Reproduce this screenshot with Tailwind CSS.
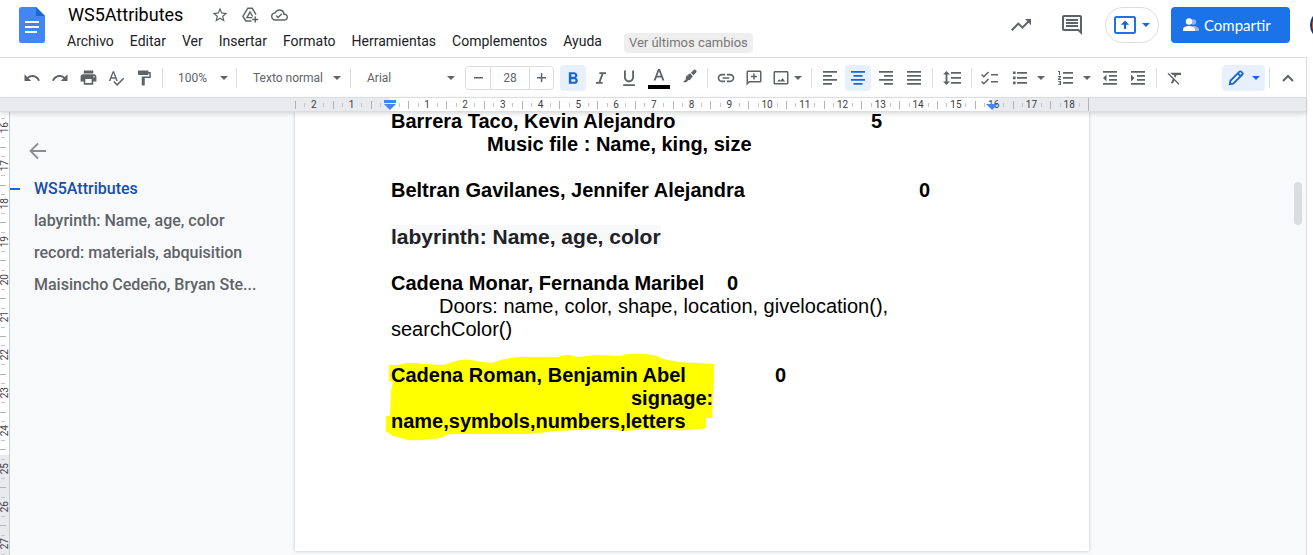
<!DOCTYPE html>
<html lang="es">
<head>
<meta charset="utf-8">
<title>WS5Attributes</title>
<script src="https://cdn.jsdelivr.net/npm/@tailwindcss/browser@4"></script>
</head>
<body class="flex h-screen flex-col overflow-hidden bg-white font-[Roboto,sans-serif] text-[#202124]">
<svg class="hidden">
  <symbol id="caret" viewBox="0 0 8 4"><path d="M0 0h8L4 4z"/></symbol>
</svg>

<header class="flex h-[57px] shrink-0 items-start overflow-hidden pl-[19px]">
  <a href="#" aria-label="Inicio de Documentos" class="mt-[7px] shrink-0">
    <svg class="h-9 w-[26px]" viewBox="0 0 26 36"><path fill="#4285f4" d="M2.500 0H17l9 9v24.500a2.500 2.500 0 0 1-2.500 2.500h-21A2.500 2.500 0 0 1 0 33.500v-31A2.500 2.500 0 0 1 2.500 0z"/><path fill="#1967d2" d="M17 0l9 9h-9z"/><path fill="#fff" d="M6 14h14v2H6zM6 19h14v2H6zM6 24h12v2H6z"/></svg>
  </a>
  <div class="ml-3.5 min-w-0 flex-1">
    <div class="flex h-7 items-center pt-0.5 pl-[9px]">
      <h1 class="text-[18px] leading-6 text-black">WS5Attributes</h1>
      <div class="ml-7 flex items-center gap-3 text-[#5f6368]">
        <button aria-label="Destacar"><svg class="size-[18px]" viewBox="0 0 24 24" fill="currentColor"><path d="M22 9.240l-7.190-.62L12 2 9.190 8.630 2 9.240l5.460 4.730L5.820 21 12 17.270 18.180 21l-1.630-7.030L22 9.240zM12 15.400l-3.760 2.270 1-4.280-3.320-2.880 4.380-.38L12 6.100l1.710 4.040 4.380.38-3.320 2.880 1 4.280L12 15.400z"/></svg></button>
        <button aria-label="Añadir a Drive"><svg class="size-[18px]" viewBox="0 0 24 24" fill="none" stroke="currentColor" stroke-width="1.900"><path d="M14 20H6.500L2.500 14 9 3h6l5 8.500"/><path d="M15 15.500H8L12 8l3.500 6"/><path d="M19 14v8M15 18h8"/></svg></button>
        <button aria-label="Estado del documento"><svg class="h-[18px] w-[17px]" viewBox="0 0 24 24" fill="currentColor"><path d="M19.350 10.040A7.490 7.490 0 0 0 12 4C9.110 4 6.600 5.640 5.350 8.040A5.994 5.994 0 0 0 0 14c0 3.310 2.690 6 6 6h13c2.760 0 5-2.240 5-5 0-2.640-2.050-4.780-4.650-4.960zM19 18H6c-2.210 0-4-1.790-4-4s1.790-4 4-4h.71C7.370 7.690 9.480 6 12 6c3.040 0 5.500 2.460 5.500 5.500v.5H19c1.660 0 3 1.340 3 3s-1.340 3-3 3z"/><path d="M10 14.200l-2.100-2.100-1.400 1.400 3.500 3.500 6-6-1.400-1.400z"/></svg></button>
      </div>
    </div>
    <nav class="flex h-[26px] items-center text-[14px] leading-5">
      <button class="px-2">Archivo</button><button class="px-2">Editar</button><button class="px-2">Ver</button><button class="px-2">Insertar</button><button class="px-2">Formato</button><button class="px-2">Herramientas</button><button class="px-2">Complementos</button><button class="px-2">Ayuda</button>
      <a href="#" class="mt-1 ml-3.5 rounded-sm bg-[#eeeeee] px-[5px] text-[13px] leading-5 text-[#777]">Ver últimos cambios</a>
    </nav>
  </div>
  <div class="mt-[7px] flex h-9 shrink-0 items-center text-[#5f6368]">
    <button aria-label="Actividad"><svg class="size-6" viewBox="0 0 24 24" fill="currentColor"><path d="M16 6l2.290 2.290-4.880 4.880-4-4L2 16.590 3.410 18l6-6 4 4 6.300-6.290L22 12V6z"/></svg></button>
    <button class="ml-[27px]" aria-label="Comentarios"><svg class="size-6" viewBox="0 0 24 24" fill="currentColor"><path d="M20 2H4c-1.100 0-2 .9-2 2v12c0 1.100.9 2 2 2h14l4 4V4c0-1.100-.9-2-2-2zm0 15.170L18.830 16H4V4h16v13.170zM6 12h12v2H6zm0-3h12v2H6zm0-3h12v2H6z"/></svg></button>
    <button class="ml-[21px] flex h-9 w-[54px] items-center justify-center gap-1.5 rounded-full border border-[#dadce0] text-[#1a73e8]" aria-label="Presentar">
      <svg class="h-[18px] w-[22px]" viewBox="0 0 22 18"><rect x="1" y="1" width="20" height="16" rx="1.500" fill="none" stroke="#1a73e8" stroke-width="2"/><path fill="#1967d2" d="M11 4.500l4.200 4.300h-3.100v4.200H9.900V8.800H6.800z"/></svg>
      <svg class="h-1 w-2" fill="#1967d2"><use href="#caret"/></svg>
    </button>
    <button class="ml-3 flex h-9 w-[119px] items-center gap-[5px] rounded-sm bg-[#1a73e8] pl-3 font-[Lato,sans-serif] text-[15px] text-white">
      <svg class="h-[14px] w-4" viewBox="0 0 16 14"><circle cx="10.500" cy="4" r="2.700" fill="#8ab8f5"/><path fill="#8ab8f5" d="M10 8c3 0 6 1.500 6 3.500V13h-5z"/><circle cx="6" cy="3.500" r="3.200" fill="#fff"/><path fill="#fff" d="M0 13v-1.700C0 9 3.500 8 6 8s6 1 6 3.300V13z"/></svg>
      Compartir</button>
    <div class="ml-5 w-[3px] overflow-hidden"><div class="size-8 rounded-full border-2 border-[#17375e] bg-[#e4572e]"></div></div>
  </div>
</header>

<div class="mr-1.5 flex min-h-0 flex-1 flex-col border-t border-r border-[#dadce0]">
  <div class="flex h-[39px] shrink-0 items-center pl-[18px] text-[#5f6368]" role="toolbar">
    <button class="flex h-[26px] w-7 items-center justify-center" aria-label="Deshacer"><svg class="size-[18px]" viewBox="0 0 24 24" fill="currentColor"><path d="M12.500 8c-2.650 0-5.050.99-6.900 2.600L2 7v9h9l-3.620-3.620c1.390-1.160 3.160-1.880 5.120-1.880 3.540 0 6.550 2.310 7.600 5.500l2.370-.78C21.080 11.030 17.150 8 12.500 8z"/></svg></button>
    <button class="flex h-[26px] w-7 items-center justify-center" aria-label="Rehacer"><svg class="size-[18px]" viewBox="0 0 24 24" fill="currentColor"><path d="M18.400 10.600C16.550 8.990 14.150 8 11.500 8c-4.650 0-8.580 3.030-9.960 7.220L3.900 16c1.050-3.190 4.050-5.500 7.600-5.500 1.950 0 3.730.72 5.120 1.880L13 16h9V7l-3.600 3.600z"/></svg></button>
    <button class="flex h-[26px] w-7 items-center justify-center" aria-label="Imprimir"><svg class="size-[19px]" viewBox="0 0 24 24" fill="currentColor"><path d="M19 8H5c-1.660 0-3 1.340-3 3v6h4v4h12v-4h4v-6c0-1.660-1.340-3-3-3zm-3 11H8v-5h8v5zm3-7c-.55 0-1-.45-1-1s.45-1 1-1 1 .45 1 1-.45 1-1 1zm-1-9H6v4h12V3z"/></svg></button>
    <button class="flex h-[26px] w-7 items-center justify-center" aria-label="Ortografía"><svg class="size-[18px]" viewBox="0 0 24 24" fill="currentColor"><path d="M12.450 16h2.090L9.430 3H7.570L2.460 16h2.090l1.120-3h5.640l1.140 3zm-6.020-5L8.500 5.480 10.570 11H6.430zm15.160.59l-8.090 8.090L9.830 16l-1.410 1.410 5.090 5.090L23 13l-1.410-1.410z"/></svg></button>
    <button class="flex h-[26px] w-7 items-center justify-center" aria-label="Copiar formato"><svg class="size-[18px]" viewBox="0 0 24 24" fill="currentColor"><path d="M18 4V3c0-.55-.45-1-1-1H5c-.55 0-1 .45-1 1v4c0 .55.45 1 1 1h12c.55 0 1-.45 1-1V6h1v4H9v11c0 .55.45 1 1 1h2c.55 0 1-.45 1-1v-9h8V4h-3z"/></svg></button>
    <span class="mx-1 h-5 w-px shrink-0 bg-[#dadce0]"></span>
    <button class="flex h-[26px] w-[65px] items-center justify-between pr-1 pl-[11px] text-[12px]">100%<svg class="h-1 w-2" fill="currentColor"><use href="#caret"/></svg></button>
    <span class="mx-1 h-5 w-px shrink-0 bg-[#dadce0]"></span>
    <button class="flex h-[26px] w-[105px] items-center justify-between pr-[5px] pl-3 text-[12px]">Texto normal<svg class="h-1 w-2" fill="currentColor"><use href="#caret"/></svg></button>
    <span class="mx-1 h-5 w-px shrink-0 bg-[#dadce0]"></span>
    <button class="flex h-[26px] w-[106px] items-center justify-between pr-1.5 pl-3 text-[12px]">Arial<svg class="h-1 w-2" fill="currentColor"><use href="#caret"/></svg></button>
    <div class="mx-1 flex h-6 w-[89px] items-stretch rounded-sm border border-[#dadce0] text-[12px]">
      <button class="flex w-6 items-center justify-center" aria-label="Reducir"><svg class="size-[9px]" viewBox="0 0 9 9"><path fill="currentColor" d="M0 4h9v1.500H0z"/></svg></button>
      <input aria-label="Tamaño de fuente" value="28" class="min-w-0 flex-1 border-x border-[#dadce0] text-center">
      <button class="flex w-[23px] items-center justify-center" aria-label="Aumentar"><svg class="size-[9px]" viewBox="0 0 9 9"><path fill="currentColor" d="M0 4h9v1.500H0zM3.800 0h1.500v9H3.800z"/></svg></button>
    </div>
    <button class="mx-px ml-0.5 flex h-[26px] w-[26px] items-center justify-center rounded-sm bg-[#e8f0fe] text-[#1967d2]" aria-label="Negrita"><svg class="size-5" viewBox="0 0 24 24" fill="currentColor"><path d="M15.600 11.790c.97-.67 1.650-1.770 1.650-2.790 0-2.260-1.750-4-4-4H7v14h7.040c2.090 0 3.710-1.700 3.710-3.790 0-1.520-.86-2.820-2.150-3.420zM10 7.500h3c.83 0 1.500.67 1.500 1.500s-.67 1.500-1.500 1.500h-3v-3zm3.500 9H10v-3h3.500c.83 0 1.500.67 1.500 1.500s-.67 1.500-1.500 1.500z"/></svg></button>
    <button class="flex h-[26px] w-7 items-center justify-center" aria-label="Cursiva"><svg class="size-5" viewBox="0 0 24 24" fill="currentColor"><path d="M10 5v2.200h2.600l-3.600 9.600H6V19h8v-2.200h-2.600L15 7.200h3V5z"/></svg></button>
    <button class="flex h-[26px] w-7 items-center justify-center" aria-label="Subrayado"><svg class="size-5" viewBox="0 0 24 24" fill="currentColor"><path d="M12 17c3.310 0 6-2.690 6-6V3h-2.200v8c0 2.100-1.700 3.800-3.800 3.800S8.200 13.100 8.200 11V3H6v8c0 3.310 2.690 6 6 6zm-7 2.500v2h14v-2H5z"/></svg></button>
    <button class="flex h-[26px] w-8 items-center justify-center" aria-label="Color del texto"><svg class="h-[22px] w-[22px]" viewBox="0 0 22 22"><path fill="currentColor" d="M10 2h2l4.400 11.500h-2l-1.100-3H8.700l-1.100 3h-2zM9.300 8.800h3.400L11 4.200z"/><path fill="#000" d="M0 18h22v4H0z"/></svg></button>
    <button class="flex h-[26px] w-7 items-start justify-center pt-1" aria-label="Resaltar"><svg class="size-[15px]" viewBox="0 0 16 16" fill="currentColor"><path d="M9.500 4l3-3c.6-.6 1.300-.6 1.800-.1l.9.900c.5.500.5 1.200-.1 1.800l-3 3zM4.800 7.500L8.600 4.600l3 3-3 3.800c-.5.600-1.300.7-1.800.400L4.600 14H1l3.300-3.400c-.5-1-.4-2.300.5-3.100z"/></svg></button>
    <span class="mx-1 h-5 w-px shrink-0 bg-[#dadce0]"></span>
    <button class="flex h-[26px] w-7 items-center justify-center" aria-label="Insertar enlace"><svg class="size-5" viewBox="0 0 24 24" fill="currentColor"><path d="M3.900 12c0-1.710 1.390-3.100 3.100-3.100h4V7H7c-2.760 0-5 2.240-5 5s2.240 5 5 5h4v-1.900H7c-1.710 0-3.100-1.390-3.100-3.100zM8 13h8v-2H8v2zm9-6h-4v1.900h4c1.710 0 3.100 1.390 3.100 3.100s-1.390 3.100-3.100 3.100h-4V17h4c2.760 0 5-2.240 5-5s-2.240-5-5-5z"/></svg></button>
    <button class="flex h-[26px] w-7 items-center justify-center" aria-label="Añadir comentario"><svg class="size-[18px]" viewBox="0 0 24 24" fill="currentColor"><path d="M20 2H4c-1.100 0-2 .9-2 2v18l4-4h14c1.100 0 2-.9 2-2V4c0-1.100-.9-2-2-2zm0 14H5.200L4 17.200V4h16v12zM11 14h2v-3h3V9h-3V6h-2v3H8v2h3z"/></svg></button>
    <button class="flex h-[26px] w-[39px] items-center gap-1 pl-1" aria-label="Insertar imagen"><svg class="size-[18px]" viewBox="0 0 24 24" fill="currentColor"><path d="M20 2.500H4c-1.100 0-2 .9-2 2v14c0 1.100.9 2 2 2h16c1.100 0 2-.9 2-2v-14c0-1.100-.9-2-2-2zm0 16H4v-14h16v14zM9.500 13.500L7 16.800h10.500L14 12l-2.700 3.700z"/></svg><svg class="h-1 w-2" fill="currentColor"><use href="#caret"/></svg></button>
    <span class="mx-1 h-5 w-px shrink-0 bg-[#dadce0]"></span>
    <button class="flex h-[26px] w-7 items-center justify-center" aria-label="Alinear a la izquierda"><svg class="h-3.5 w-3.5" viewBox="0 0 14 14" fill="currentColor"><path d="M0 0h14v1.700H0zM0 4h9v1.700H0zM0 8h14v1.700H0zM0 12h9v1.700H0z"/></svg></button>
    <button class="mx-px flex h-[26px] w-[26px] items-center justify-center rounded-sm bg-[#e8f0fe] text-[#1967d2]" aria-label="Centrar"><svg class="h-3.5 w-3.5" viewBox="0 0 14 14" fill="currentColor"><path d="M0 0h14v1.700H0zM2.500 4h9v1.700h-9zM0 8h14v1.700H0zM2.500 12h9v1.700h-9z"/></svg></button>
    <button class="flex h-[26px] w-7 items-center justify-center" aria-label="Alinear a la derecha"><svg class="h-3.5 w-3.5" viewBox="0 0 14 14" fill="currentColor"><path d="M0 0h14v1.700H0zM5 4h9v1.700H5zM0 8h14v1.700H0zM5 12h9v1.700H5z"/></svg></button>
    <button class="flex h-[26px] w-7 items-center justify-center" aria-label="Justificar"><svg class="h-3.5 w-3.5" viewBox="0 0 14 14" fill="currentColor"><path d="M0 0h14v1.700H0zM0 4h14v1.700H0zM0 8h14v1.700H0zM0 12h14v1.700H0z"/></svg></button>
    <span class="mx-1 h-5 w-px shrink-0 bg-[#dadce0]"></span>
    <button class="flex h-[26px] w-[30px] items-center justify-center" aria-label="Interlineado"><svg class="h-3.5 w-[18px]" viewBox="0 0 18 14" fill="currentColor"><path d="M8 1h10v1.800H8zM8 6h10v1.800H8zM8 11h10v1.800H8zM3.500 0L7 3.500H4.400v7H7L3.500 14 0 10.500h2.600v-7H0z"/></svg></button>
    <span class="mx-1 h-5 w-px shrink-0 bg-[#dadce0]"></span>
    <button class="flex h-[26px] w-7 items-center justify-center" aria-label="Lista de comprobación"><svg class="h-3.5 w-[18px]" viewBox="0 0 18 14" fill="none" stroke="currentColor" stroke-width="1.600"><path d="M.6 3.500l2.200 2.200L7.500 1M.6 10.500l2.200 2.200L7.500 8M10 3.800h7M10 10.800h7"/></svg></button>
    <button class="flex h-[26px] w-[46px] items-center justify-end gap-2.5 pr-[5px]" aria-label="Lista con viñetas"><svg class="h-3.5 w-3.5" viewBox="0 0 14 14" fill="currentColor"><path d="M4 1h10v1.700H4zM4 6h10v1.700H4zM4 11h10v1.700H4zM0 .5h2.600v2.600H0zM0 5.600h2.600v2.600H0zM0 10.600h2.600v2.600H0z"/></svg><svg class="h-1 w-2" fill="currentColor"><use href="#caret"/></svg></button>
    <button class="flex h-[26px] w-[46px] items-center justify-end gap-2.5 pr-[5px]" aria-label="Lista numerada"><svg class="h-3.5 w-[15px]" viewBox="0 0 15 14" fill="currentColor"><path d="M5 1h10v1.700H5zM5 6h10v1.700H5zM5 11h10v1.700H5zM0 0h2v4H1V1H0zM0 5h3v1L1.400 8H3v1H0V8l1.600-2H0zM0 10h3v4H0v-.8h2v-.8H1v-.8h1v-.8H0z"/></svg><svg class="h-1 w-2" fill="currentColor"><use href="#caret"/></svg></button>
    <button class="flex h-[26px] w-7 items-center justify-center" aria-label="Reducir sangría"><svg class="size-3.5" viewBox="0 0 14 14" fill="currentColor"><path d="M0 0h14v1.700H0zM6 4h8v1.700H6zM6 8h8v1.700H6zM0 12h14v1.700H0zM3.500 3.500v7L0 7z"/></svg></button>
    <button class="flex h-[26px] w-7 items-center justify-center" aria-label="Aumentar sangría"><svg class="size-3.5" viewBox="0 0 14 14" fill="currentColor"><path d="M0 0h14v1.700H0zM6 4h8v1.700H6zM6 8h8v1.700H6zM0 12h14v1.700H0zM0 3.500v7L3.500 7z"/></svg></button>
    <span class="mx-1 h-5 w-px shrink-0 bg-[#dadce0]"></span>
    <button class="flex h-[26px] w-7 items-center justify-center" aria-label="Borrar formato"><svg class="size-[18px]" viewBox="0 0 24 24" fill="currentColor"><path d="M3.270 5L2 6.270l6.970 6.970L6.500 19h3l1.570-3.660L16.730 21 18 19.730 3.550 5.270 3.270 5zM6 5v.18L8.820 8h2.400l-.72 1.680 2.100 2.100L14.210 8H20V5H6z"/></svg></button>
    <button class="ml-auto flex h-[26px] w-[43px] items-center justify-center gap-2 rounded-sm bg-[#e8f0fe] text-[#1967d2]" aria-label="Modo de edición"><svg class="size-4" viewBox="0 0 16 16" fill="none" stroke="currentColor" stroke-width="1.800"><path d="M1.800 14.200l.6-3.400L11.500 1.700c.5-.5 1.200-.5 1.700 0l1.100 1.100c.5.500.5 1.200 0 1.700L5.200 13.600z"/><path d="M10 3.500L12.500 6"/></svg><svg class="h-1 w-2" fill="currentColor"><use href="#caret"/></svg></button>
    <span class="mx-1 h-5 w-px shrink-0 bg-[#dadce0]"></span>
    <button class="mr-1 flex h-[26px] w-7 items-center justify-center" aria-label="Ocultar menús"><svg class="h-2 w-3" viewBox="0 0 12 8" fill="none" stroke="currentColor" stroke-width="2"><path d="M1 7l5-5 5 5"/></svg></button>
  </div>

  <div class="relative z-10 flex h-[15px] shrink-0 border-y border-[#dadce0] bg-[#e8eaed] pl-[295px] shadow-[0_2px_4px_rgba(60,64,67,0.18)]">
    <div class="relative w-[794px]">
      <div class="absolute inset-y-0 left-[95px] w-[602px] bg-white"></div>
      <div id="hruler" class="relative flex h-full border-r border-[#b0b4b8] text-[10px] leading-[13px] text-[#3c4043]"></div>
      <svg class="absolute top-[2px] left-[89px] h-2.5 w-3" viewBox="0 0 12 10" fill="#4285f4"><path d="M0 0h12v3H0zM0 4h12l-6 6z"/></svg>
      <svg class="absolute top-[6px] left-[691px] h-1.5 w-3" viewBox="0 0 12 6" fill="#4285f4"><path d="M0 0h12L6 6z"/></svg>
    </div>
  </div>

  <div class="flex min-h-0 flex-1 overflow-hidden bg-[#f8f9fb]">
    <div class="w-2.5 shrink-0 overflow-hidden border-r border-[#c9cbcf] bg-[linear-gradient(#fff_343px,#e8eaed_343px)]">
      <div id="vruler" class="-mt-[3px] grid h-[454px] text-[10px] leading-[10px] text-[#3c4043]"></div>
    </div>
    <aside class="w-[284px] shrink-0 pt-[30px] pr-6">
      <button class="mb-[13px] ml-[19px] block text-[#8a8d91]" aria-label="Cerrar esquema"><svg class="size-[18px]" viewBox="0 0 18 18" fill="none" stroke="currentColor" stroke-width="1.800"><path d="M17 9H2M9 1.500L1.500 9 9 16.500"/></svg></button>
      <nav class="flex flex-col text-[16px] leading-8 font-medium text-[#5f6368]">
        <a href="#ws" class="flex items-center gap-3.5 text-[#174ea6]"><span class="h-0.5 w-2.5 bg-[#1967d2]"></span>WS5Attributes</a>
        <a href="#laby" class="truncate pl-6">labyrinth: Name, age, color</a>
        <a href="#rec" class="truncate pl-6">record: materials, abquisition</a>
        <a href="#mai" class="truncate pl-6">Maisincho Cedeño, Bryan Ste...</a>
      </nav>
    </aside>
    <main class="relative mb-[4px] ml-px w-[794px] shrink-0 bg-white pr-24 pl-24 font-['Liberation_Sans',Arial,sans-serif] text-[20px] leading-[23px] text-black shadow-[0_0_3px_rgba(60,64,67,0.3)]">
      <svg class="absolute top-[241px] left-[90px] h-[90px] w-[330px]" viewBox="0 0 330 90"><path fill="#ff0" d="M4 12H13Q24 8 37 11L58 12 68 9Q80 4 96 9L107 10Q118 5 135 4L168 4H173Q180 0 193 4L210 2 236 3Q242 0 257 1 270 1 278 6L294 9 329 11V27L327 65H321V75Q302 78 290 77L262 76 239 78 227 77 217 76 170 78 145 81H65Q54 86 47 86 32 88 23 87L8 83 1 78V63H5L6 38 8 29 4 28Z"/></svg>
      <div class="relative -mt-[2px] flex flex-col [tab-size:48px] whitespace-pre-wrap">
        <p class="font-bold">Barrera Taco, Kevin Alejandro					5</p>
        <p class="font-bold">		Music file : Name, king, size</p>
        <p><br></p>
        <p class="font-bold">Beltran Gavilanes, Jennifer Alejandra				0</p>
        <p><br></p>
        <h2 class="font-bold text-[#202124]"><span class="bg-[#f8f9fa] text-[21px]">labyrinth: Name, age, color</span></h2>
        <p><br></p>
        <p class="font-bold">Cadena Monar, Fernanda Maribel	0</p>
        <p>	Doors: name, color, shape, location, givelocation(), searchColor()</p>
        <p><br></p>
        <p class="font-bold">Cadena Roman, Benjamin Abel		0</p>
        <p class="font-bold">					signage:</p>
        <p class="font-bold">name,symbols,numbers,letters</p>
      </div>
    </main>
    <div class="flex flex-1 justify-end pt-[70px] pr-1"><div class="h-[43px] w-2 rounded-full bg-[#dadce0]"></div></div>
  </div>
</div>

<script>
  // One cell per centimetre: a long tick at its start, short ticks at the quarters, the number in the middle.
  const h = document.getElementById('hruler');
  for (let n = -2; n <= 18; n++) {
    h.insertAdjacentHTML('beforeend', `<div class="relative flex flex-1 items-center justify-center">
      <i class="absolute top-[3px] left-0 h-2 w-px bg-[#b0b4b8]"></i><i class="absolute top-[5px] left-1/4 h-1 w-px bg-[#c4c7ca]"></i><i class="absolute top-[5px] left-3/4 h-1 w-px bg-[#c4c7ca]"></i>
      <span>${n === 0 ? '' : Math.abs(n)}</span></div>`);
  }
  const v = document.getElementById('vruler');
  for (let n = 16; n <= 27; n++) {
    v.insertAdjacentHTML('beforeend', `<div class="relative flex items-center justify-center">
      <i class="absolute top-0 left-0 h-px w-1.5 bg-[#b0b4b8]"></i><i class="absolute top-1/4 left-px h-px w-1 bg-[#c4c7ca]"></i><i class="absolute top-3/4 left-px h-px w-1 bg-[#c4c7ca]"></i>
      <span class="rotate-180 [writing-mode:vertical-rl]">${n}</span></div>`);
  }
</script>
</body>
</html>
